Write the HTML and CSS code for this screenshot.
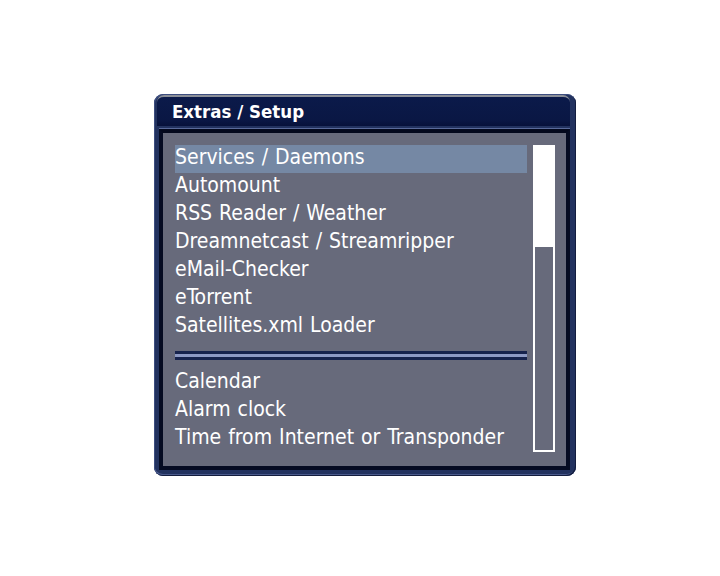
FILE: index.html
```html
<!DOCTYPE html>
<html>
<head>
<meta charset="utf-8">
<link rel="stylesheet" href="styles.css">
</head>
<body>
<div class="window">
  <div class="titlebar"><span class="title">Extras / Setup</span></div>
  <div class="panel">
    <div class="list">
      <div class="item sel">Services / Daemons</div>
      <div class="item">Automount</div>
      <div class="item">RSS Reader / Weather</div>
      <div class="item">Dreamnetcast / Streamripper</div>
      <div class="item">eMail-Checker</div>
      <div class="item">eTorrent</div>
      <div class="item">Satellites.xml Loader</div>
      <div class="sep"><div class="sepline"></div></div>
      <div class="item">Calendar</div>
      <div class="item">Alarm clock</div>
      <div class="item">Time from Internet or Transponder</div>
    </div>
    <div class="scroll"><div class="thumb"></div></div>
  </div>
</div>
</body>
</html>
```
FILE: styles.css
```css
html, body {
  margin: 0;
  padding: 0;
  background: #ffffff;
}
body {
  padding: 94px 0 0 154px;
  font-family: "DejaVu Sans", sans-serif;
}
.window {
  width: 422px;
  height: 382px;
  box-sizing: border-box;
  background: #22325f;
  border-radius: 9px;
  padding: 1px 6px 6px 5px;
  box-shadow: inset 1px 1px 0 #3d4e80, inset -1px -1px 0 #131d3f, inset 0 -2px 0 #4a5a8c;
  display: flex;
  flex-direction: column;
}
.titlebar {
  height: 31px;
  box-sizing: border-box;
  margin: 0 0 0 -2px;
  padding: 1px 0 0 15px;
  background: linear-gradient(#0b1a4a, #0a1744 80%, #07113a);
  border-top: 2px solid #8b8f98;
  border-radius: 7px 7px 0 0;
  display: flex;
  align-items: center;
}
.title {
  color: #ffffff;
  font-family: "DejaVu Sans Condensed", "DejaVu Sans", sans-serif;
  font-weight: bold;
  font-size: 18.5px;
  line-height: 22px;
}
.panel {
  margin-top: 3px;
  border: 4px solid #050b22;
  border-top-color: #03081c;
  background: #676a7b;
  flex: 1;
  display: flex;
  padding: 12px 11px 0 12px;
  gap: 6px;
  box-shadow: 0 -1px 0 #5a6a9a;
}
.list {
  width: 352px;
  display: flex;
  flex-direction: column;
}
.item {
  height: 28px;
  box-sizing: border-box;
  padding-bottom: 4px;
  line-height: 24px;
  color: #ffffff;
  font-family: "DejaVu Sans Condensed", "DejaVu Sans", sans-serif;
  font-size: 21px;
  word-spacing: 1px;
  white-space: nowrap;
}
.item.sel {
  background: #7588a4;
}
.sep {
  height: 28px;
  display: flex;
  align-items: center;
}
.sepline {
  width: 100%;
  height: 3px;
  background: #8d9ac4;
  border-top: 3px solid #16234d;
  border-bottom: 3px solid #16234d;
}
.scroll {
  width: 22px;
  height: 307px;
  box-sizing: border-box;
  border: 2px solid #ffffff;
}
.thumb {
  height: 100px;
  background: #ffffff;
}
```
